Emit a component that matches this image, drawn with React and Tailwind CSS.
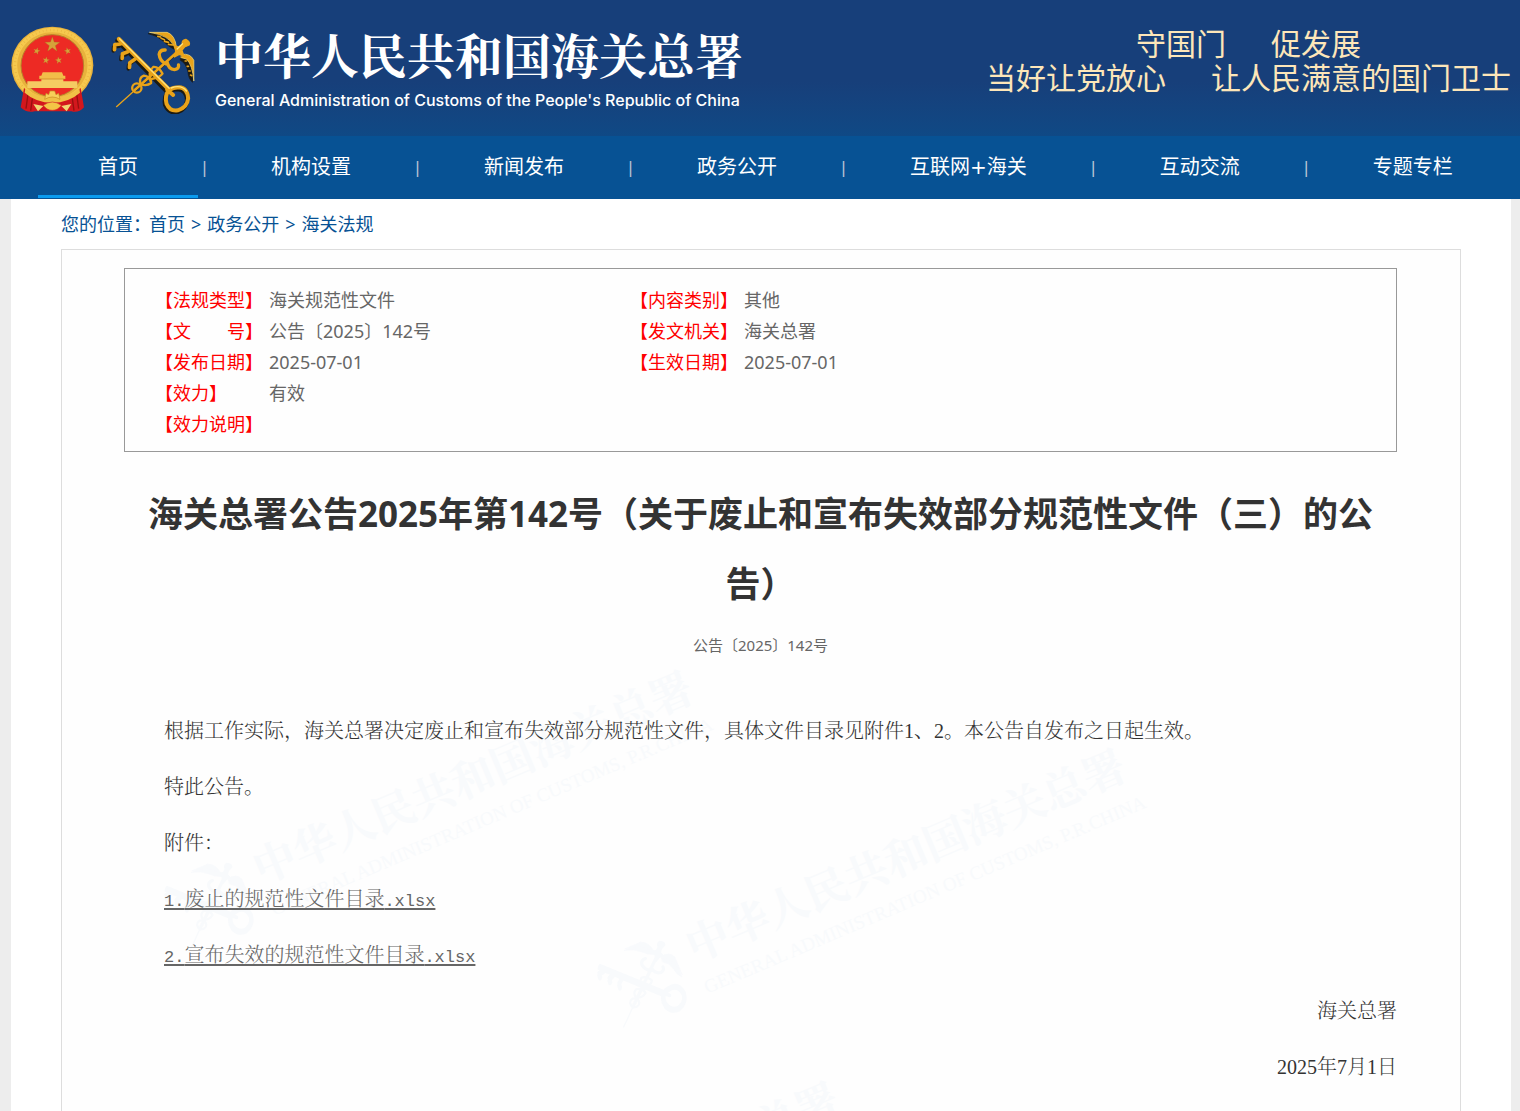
import { Fragment } from "react";


const navItems = ["首页", "机构设置", "新闻发布", "政务公开", "互联网+海关", "互动交流", "专题专栏"];

const crumbs = ["首页", "政务公开", "海关法规"];

const infoRows = [
    ["【法规类型】", "海关规范性文件", "【内容类别】", "其他"],
    ["【文　　号】", "公告〔2025〕142号", "【发文机关】", "海关总署"],
    ["【发布日期】", "2025-07-01", "【生效日期】", "2025-07-01"],
    ["【效力】", "有效", "", ""],
    ["【效力说明】", "", "", ""]
];

const files = [
    { no : "1.", name : "废止的规范性文件目录" },
    { no : "2.", name : "宣布失效的规范性文件目录" }
];

const star = "M0 -10 L2.4 -3.2 L9.5 -3.1 L3.8 1.2 L5.9 8.1 L0 4 L-5.9 8.1 L-3.8 1.2 L-9.5 -3.1 L-2.4 -3.2 Z";


function Emblem(){
    return(
        <svg viewBox="33 78 249 264" className="h-[88px] w-[83px] shrink-0" role="img" aria-label="国徽">
            <ellipse cx="157" cy="196" rx="123" ry="116" fill="#e8b23c" />
            <ellipse cx="157" cy="196" rx="112" ry="106" fill="none" stroke="#f6c94e" strokeWidth="13" />
            <ellipse cx="157" cy="196" rx="112" ry="106" fill="none" stroke="#e9b440" strokeWidth="7" strokeDasharray="2 9" />
            <ellipse cx="157" cy="197" rx="94" ry="93" fill="#ed2a24" stroke="#b8802a" strokeWidth="3" />
            <g fill="#d5a23a" stroke="#a8651a" strokeWidth=".4">
                <path d={star} transform="translate(157 134) scale(2.4)" />
                <path d={star} transform="translate(110 153) scale(1.1) rotate(15)" />
                <path d={star} transform="translate(203 153) scale(1.1) rotate(-15)" />
                <path d={star} transform="translate(138 181) scale(1.1) rotate(10)" />
                <path d={star} transform="translate(176 181) scale(1.1) rotate(-10)" />
            </g>
            <path d="M128 217 H186 L190 227 H196 V237 H118 V227 H124 Z" fill="#f2bd49" />
            <path d="M124 237 H190 V244 H232 V264 H82 V244 H124 Z" fill="#f5cb62" />
            <path d="M120 237 H194" stroke="#c77b22" strokeWidth="2" />
            <path d="M72 264 L62 322 Q80 340 104 334 L214 334 Q236 340 252 322 L242 264 L206 296 Q157 316 108 296 Z" fill="#d3171d" />
            <path d="M84 282 L78 326 M97 296 L92 332 M230 282 L236 326 M217 296 L222 332" stroke="#98100f" strokeWidth="4" fill="none" />
            <path d="M76 266 Q110 292 157 292 Q204 292 238 266 L240 278 Q206 308 157 308 Q108 308 74 278 Z" fill="#f0c146" />
            <path d="M134 298 L138 280 L146 284 L150 273 H164 L168 284 L176 280 L180 298 Q157 284 134 298 Z" fill="#f7cf5a" stroke="#c98a22" strokeWidth="2" />
            <path d="M100 312 L130 318 L114 334 Z M214 312 L184 318 L200 334 Z" fill="#f2d573" />
            <path d="M130 316 Q157 296 184 316 Q174 331 157 331 Q140 331 130 316 Z" fill="#f3c646" stroke="#d7342a" strokeWidth="2" />
        </svg>
    )
}


// golden key crossed with the winged staff, drawn in a 260 x 252 box that starts at 15,15
function KeysShape({ light, dark, line }){
    return(
        <g strokeLinecap="round" strokeLinejoin="round" fill="none">
            <g stroke={dark} fill="none" transform="translate(-4 4)">
                <path d="M41 43 L192 198" strokeWidth="14" />
                <path d="M46 60 L29 62 L28 74 M68 84 L52 90 L51 100 M90 104 L74 116 L73 128" strokeWidth="10" />
                <path d="M190 200 Q180 214 184 236 Q194 260 218 258 Q246 250 250 222 Q248 190 222 188 Q204 188 190 200" strokeWidth="13" />
                <path d="M88 196 L218 80" strokeWidth="9" />
                <path d="M134 22 Q180 19 196 28 Q212 42 213 70 Q196 62 180 46 Q162 28 134 22 Z" fill={dark} strokeWidth="2" />
                <path d="M232 88 Q258 84 267 106 L266 168 Q254 158 252 134 Q246 110 230 102 Z" fill={dark} strokeWidth="2" />
            </g>
            <path d="M34 245 L84 200" stroke={light} strokeWidth="4" />
            <path d="M88 196 L222 76" stroke={light} strokeWidth="8" />
            <g stroke={light} strokeWidth="7">
                <ellipse cx="95" cy="189" rx="14" ry="14" />
                <path d="M106 178 Q100 158 116 152 Q134 154 138 174 Q126 184 106 178" />
                <path d="M138 170 Q126 142 144 126 Q160 124 172 146 Q164 158 138 162" />
                <path d="M182 116 Q164 108 162 88 Q164 74 180 75 M186 112 Q190 132 208 134 Q222 132 220 120" strokeWidth="10" />
            </g>
            <g fill={light} stroke={line} strokeWidth="2">
                <path d="M134 22 L186 22 Q210 30 214 68 L204 60 Q192 32 134 22 Z" />
                <path d="M230 88 Q256 84 266 106 L266 168 Q262 120 244 102 L228 98 Z" />
            </g>
            <path d="M158 34 L166 36 M168 40 L178 44 M178 49 L190 52 M190 58 L202 60 M244 108 L240 108 M250 124 L246 124 M255 138 L251 138 M260 152 L256 150" stroke={light} strokeWidth="5" />
            <path d="M206 60 L220 66 L232 58 Q228 46 242 43 Q256 50 252 60 L238 66 L230 76 L236 92 L222 88 L208 96 L212 78 Z" fill={light} stroke={light} strokeWidth="4" />
            <path d="M46 57 L29 59 L28 74 M68 80 L52 86 L51 100 M90 102 L74 113 L73 127" stroke={light} strokeWidth="11" />
            <path d="M41 42 L192 194" stroke={light} strokeWidth="13" />
            <path d="M190 196 Q178 214 184 236 Q194 260 218 256 Q246 248 249 220 Q246 188 222 187 Q204 187 190 196 M186 194 L204 210" stroke={light} strokeWidth="12" />
            <path d="M43 41 L192 190 M198 189 Q228 178 244 198 M216 72 L232 56" stroke={line} strokeWidth="4" />
        </g>
    )
}


function Watermark({ className }){
    return(
        <svg viewBox="0 0 560 290" className={`absolute h-[290px] w-[560px] overflow-visible ${className}`} aria-hidden="true">
            <g transform="translate(55 235) rotate(-23)" fill="#f8fafc">
                <g transform="translate(-42 -38) scale(.32) translate(-15 -8)">
                    <KeysShape light="#f8fafc" dark="#f8fafc" line="#f8fafc" />
                </g>
                <text x="54" y="6" fontSize="43" className="font-['Noto_Serif_CJK_SC','Noto_Sans_CJK_SC',serif] font-bold">中华人民共和国海关总署</text>
                <text x="54" y="40" fontSize="19" className="font-['Liberation_Serif',serif]">GENERAL ADMINISTRATION OF CUSTOMS, P.R.CHINA</text>
            </g>
        </svg>
    )
}


function Header(){
    return(
        <header className="flex h-[136px] items-start justify-between bg-linear-to-b from-[#173f7a] from-60% to-[#0f4985] pl-[11px] pr-[9px]">
            <a href="#" className="flex pt-[26px]">
                <Emblem />
                <svg viewBox="15 15 260 252" className="ml-4 mt-1 h-[84px] w-[87px] shrink-0" role="img" aria-label="海关关徽">
                    <KeysShape light="#e9a31a" dark="#1c1a12" line="#ffe27a" />
                </svg>
                <div className="ml-[18px] text-white">
                    <p className="font-['Noto_Serif_CJK_SC','Noto_Sans_CJK_SC',serif] text-[48px] font-bold leading-[56px] whitespace-nowrap">中华人民共和国海关总署</p>
                    <p className="mt-2 font-['Inter',sans-serif] text-[16px] font-medium leading-5 whitespace-nowrap">General Administration of Customs of the People's Republic of China</p>
                </div>
            </a>
            <div className="flex flex-col items-center pt-[27px] text-[30px] leading-[34px] text-[#fde6b9] whitespace-nowrap">
                <p className="flex gap-[45px]"><span>守国门</span><span>促发展</span></p>
                <p className="flex gap-[45px]"><span>当好让党放心</span><span>让人民满意的国门卫士</span></p>
            </div>
        </header>
    )
}


function Nav(){
    return(
        <nav className="flex h-[63px] bg-[#075294] pl-[38px] font-['DejaVu_Sans','Noto_Sans_CJK_SC',sans-serif] text-xl text-white">
            {navItems.map((item, i) => (
                <Fragment key={item}>
                    {i > 0 && <span className="w-[13px] pt-[22px] text-center text-base leading-5 text-[#b8c4d4]">|</span>}
                    <a href="#" className={`h-[62px] border-b-3 px-[60px] leading-[62px] whitespace-nowrap ${i === 0 ? "border-[#0a9bef]" : "border-transparent"}`}>{item}</a>
                </Fragment>
            ))}
        </nav>
    )
}


function InfoTable(){
    return(
        <div className="border border-[#999] px-[30px] pb-[11px] pt-4">
            <table className="w-full table-fixed text-left text-[18px] leading-[31px] text-[#666]">
                <colgroup>
                    <col className="w-[114px]" />
                    <col className="w-[361px]" />
                    <col className="w-[114px]" />
                    <col />
                </colgroup>
                <tbody>
                    {infoRows.map((row) => (
                        <tr key={row[0]}>
                            <th className="font-normal text-[#f00] whitespace-nowrap">{row[0]}</th>
                            <td>{row[1]}</td>
                            <th className="font-normal text-[#f00] whitespace-nowrap">{row[2]}</th>
                            <td>{row[3]}</td>
                        </tr>
                    ))}
                </tbody>
            </table>
        </div>
    )
}


function App(){
    return(
        <div className="flex min-h-screen flex-col bg-[#ededed] font-['Noto_Sans','Noto_Sans_CJK_SC',sans-serif]" lang="zh-CN">
            <Header />
            <Nav />
            <main className="ml-[11px] mr-[9px] flex flex-1 flex-col bg-white px-[50px]">
                <div className="flex h-[50px] items-center gap-1.5 text-[18px] text-[#075294]">
                    <span className="-mr-2">您的位置：</span>
                    {crumbs.map((crumb, i) => (
                        <Fragment key={crumb}>
                            {i > 0 && <span>&gt;</span>}
                            <a href="#">{crumb}</a>
                        </Fragment>
                    ))}
                </div>

                <article className="relative flex-1 overflow-hidden border border-b-0 border-[#ddd] bg-[#fefefe] pl-[62px] pr-[63px] pt-[18px]">
                    <Watermark className="left-[92px] top-[415px]" />
                    <Watermark className="left-[525px] top-[493px]" />
                    <Watermark className="left-[238px] top-[826px]" />

                    <div className="relative">
                        <InfoTable />
                        <h1 className="mt-[27px] text-center text-[35px] font-bold leading-[70px] text-[#333]">海关总署公告2025年第142号（关于废止和宣布失效部分规范性文件（三）的公告）</h1>
                        <p className="mt-[11px] text-center text-[15px] leading-[30px] text-[#666]">公告〔2025〕142号</p>

                        <div className="mt-[43px] font-['Liberation_Serif','Noto_Serif_CJK_SC','Noto_Sans_CJK_SC',serif] text-xl font-light leading-[56px] text-[#333]">
                            <p className="indent-[2em]">根据工作实际，海关总署决定废止和宣布失效部分规范性文件，具体文件目录见附件1、2。本公告自发布之日起生效。</p>
                            <p className="indent-[2em]">特此公告。</p>
                            <p className="indent-[2em]">附件：</p>
                            {files.map((file) => (
                                <p key={file.no} className="pl-10">
                                    <a href="#" className="text-[#666] underline decoration-2 underline-offset-2">
                                        <span className="font-['Liberation_Mono',monospace] text-[17px] leading-none">{file.no}</span>
                                        {file.name}
                                        <span className="font-['Liberation_Mono',monospace] text-[17px] leading-none">.xlsx</span>
                                    </a>
                                </p>
                            ))}
                            <p className="text-right">海关总署</p>
                            <p className="text-right">2025年7月1日</p>
                        </div>
                    </div>
                </article>
            </main>
        </div>
    )
}


export default App;
